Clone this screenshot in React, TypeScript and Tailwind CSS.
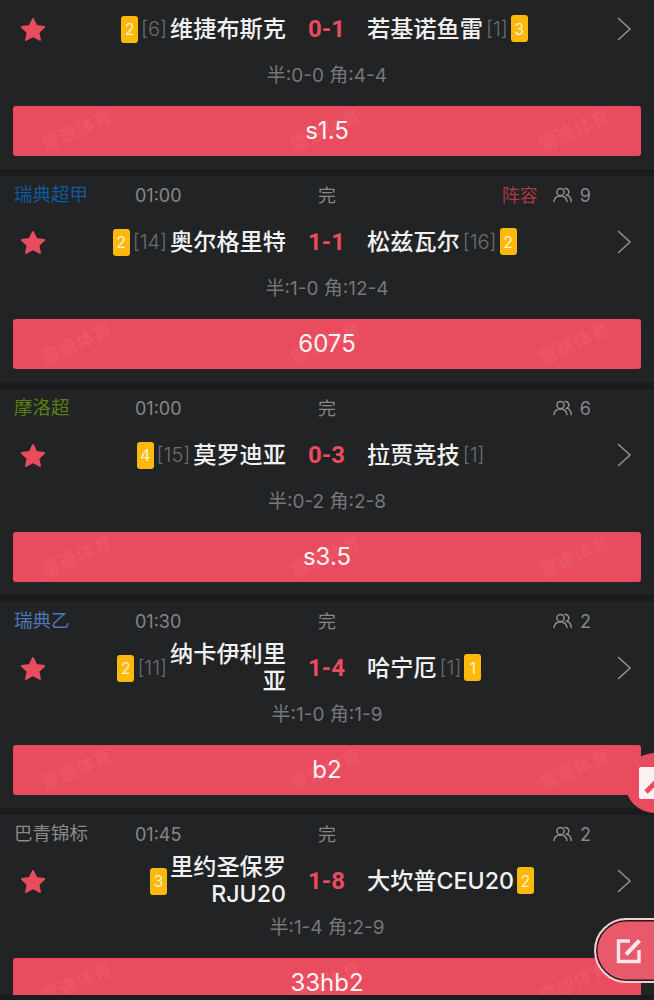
const FONT = 'font-["Inter","Noto_Sans_CJK_SC",sans-serif]';

type Match = {
  league?: string;
  leagueColor?: string;
  time?: string;
  lineup?: boolean;
  count?: number;
  home: string[];
  homeSeed?: string;
  homeCard?: number;
  away: string;
  awaySeed?: string;
  awayCard?: number;
  score: string;
  half: string;
  tip: string;
};

const MATCHES: Match[] = [
  { home: ['维捷布斯克'], homeSeed: '[6]', homeCard: 2, away: '若基诺鱼雷', awaySeed: '[1]', awayCard: 3, score: '0-1', half: '半:0-0 角:4-4', tip: 's1.5' },
  { league: '瑞典超甲', leagueColor: 'text-[#0f5a9e]', time: '01:00', lineup: true, count: 9, home: ['奥尔格里特'], homeSeed: '[14]', homeCard: 2, away: '松兹瓦尔', awaySeed: '[16]', awayCard: 2, score: '1-1', half: '半:1-0 角:12-4', tip: '6075' },
  { league: '摩洛超', leagueColor: 'text-[#5c7d12]', time: '01:00', count: 6, home: ['莫罗迪亚'], homeSeed: '[15]', homeCard: 4, away: '拉贾竞技', awaySeed: '[1]', score: '0-3', half: '半:0-2 角:2-8', tip: 's3.5' },
  { league: '瑞典乙', leagueColor: 'text-[#4d78b5]', time: '01:30', count: 2, home: ['纳卡伊利里', '亚'], homeSeed: '[11]', homeCard: 2, away: '哈宁厄', awaySeed: '[1]', awayCard: 1, score: '1-4', half: '半:1-0 角:1-9', tip: 'b2' },
  { league: '巴青锦标', leagueColor: 'text-[#8a8a8a]', time: '01:45', count: 2, home: ['里约圣保罗', 'RJU20'], homeCard: 3, away: '大坎普CEU20', awayCard: 2, score: '1-8', half: '半:1-4 角:2-9', tip: '33hb2' },
];

function StarIcon() {
  return (
    <svg width="26" height="25" viewBox="0 0 26 25" className="text-[#e94c5e]">
      <path
        d="M13 2l3.4 7 7.8 1-5.7 5.4 1.5 7.6L13 19.3l-7 3.7 1.5-7.6L1.8 10l7.8-1z"
        fill="currentColor"
        stroke="currentColor"
        strokeWidth="1.8"
        strokeLinejoin="round"
      />
    </svg>
  );
}

function ChevronIcon() {
  return (
    <svg width="16" height="26" viewBox="0 0 16 26" fill="none" stroke="#8f8f8f" strokeWidth="1.6">
      <path d="M2 2l12 11L2 24" />
    </svg>
  );
}

function PeopleIcon() {
  return (
    <svg width="20" height="16" viewBox="0 0 20 16" fill="none" stroke="#8f8f8f" strokeWidth="1.5" strokeLinecap="round">
      <circle cx="7.5" cy="5" r="3.6" />
      <path d="M1 14.5c.4-3.6 2.8-5.6 6.5-5.6s6 2 6.5 5.6" />
      <path d="M12 1.6c2-.4 3.9 1.2 3.9 3.3 0 1.5-.8 2.7-2 3.3 2.7.6 4 2.8 4.4 6.3" />
    </svg>
  );
}

function EditIcon({ size = 26 }: { size?: number }) {
  return (
    <svg width={size} height={size} viewBox="0 0 26 26" fill="none">
      <path d="M14 3H2.5v20.5H23V12" stroke="#fbe6e8" strokeWidth="3.4" />
      <path d="M10 16.5L23.5 2.5" stroke="#fbe6e8" strokeWidth="4" />
    </svg>
  );
}

function CardBadge({ n }: { n: number }) {
  return (
    <span className="flex h-[27px] w-[17px] shrink-0 items-center justify-center rounded-[3px] bg-[#fdb90b] text-[16px] text-[#fff3cf]">
      {n}
    </span>
  );
}

function Seed({ text }: { text: string }) {
  return <span className="text-[20px] font-light text-[#6a6d70]">{text}</span>;
}

function TipButton({ label }: { label: string }) {
  return (
    <div className="relative mx-[13px] flex h-[50px] shrink-0 items-center justify-center overflow-hidden rounded-[3px] bg-[#e94c5e] text-[24px] text-[#fdf3f4]">
      <span className="relative">{label}</span>
      {/* watermark */}
      <div className="absolute inset-0 flex justify-between pl-[29px] pr-[25px] pt-[13px]">
        {[0, 1, 2].map((i) => (
          <span key={i} className="block -rotate-[24deg] text-[18px] leading-[22px] tracking-[1px] text-white/[0.07]">
            雷速体育
          </span>
        ))}
      </div>
    </div>
  );
}

function MatchCard({ m }: { m: Match }) {
  return (
    <div className="shrink-0 border-b-[7px] border-[#1a1b1d] bg-[#222325] pb-[13px]">
      {m.league ? (
        <div className="grid h-[38px] grid-cols-[135px_150px_84px_1fr] items-center text-[18px] text-[#85878a]">
          <span className={`pl-[14px] text-[18.5px] ${m.leagueColor}`}>{m.league}</span>
          <span>{m.time}</span>
          <span className="text-center text-[18px]">完</span>
          <div className="flex items-center justify-end gap-[7px] pr-[63px]">
            {m.lineup && <span className="mr-[8px] text-[18px] text-[#a93a44]">阵容</span>}
            <PeopleIcon />
            <span>{m.count}</span>
          </div>
        </div>
      ) : (
        <div className="h-[1px]" />
      )}

      <div className="flex h-[56px] items-center">
        <div className="flex w-[60px] justify-start pl-[20px]">
          <StarIcon />
        </div>
        <div className="flex w-[226px] items-center justify-end gap-[3px]">
          {m.homeCard && <CardBadge n={m.homeCard} />}
          {m.homeSeed && <Seed text={m.homeSeed} />}
          <div className="text-right text-[23.2px] leading-[27px] font-medium text-[#f2f2f2]">
            {m.home.map((line) => (
              <div key={line}>{line}</div>
            ))}
          </div>
        </div>
        <div className="w-[81px] text-center font-['Roboto'] text-[24px] font-bold text-[#e94c5e]">{m.score}</div>
        <div className="flex flex-1 items-center gap-[3px]">
          <span className="text-[23.2px] font-medium text-[#f2f2f2]">{m.away}</span>
          {m.awaySeed && <Seed text={m.awaySeed} />}
          {m.awayCard && <CardBadge n={m.awayCard} />}
        </div>
        <div className="pr-[22px]">
          <ChevronIcon />
        </div>
      </div>

      <div className="flex h-[38px] items-center justify-center text-[19px] text-[#75777a]">{m.half}</div>
      <div className="h-[11px]" />
      <TipButton label={m.tip} />
    </div>
  );
}

export default function App() {
  return (
    <div className={`relative flex h-[1000px] w-[654px] flex-col overflow-hidden bg-[#222325] ${FONT}`}>
      {MATCHES.map((m) => (
        <MatchCard key={m.tip} m={m} />
      ))}

      {/* bottom edge */}
      <div className="absolute inset-x-0 bottom-0 h-[5px] bg-[#1a1b1d]" />

      {/* floating buttons */}
      <div className="absolute top-[753px] left-[625px] flex h-[60px] w-[60px] items-center rounded-full bg-[#e94c5e] pl-[14px]">
        <div className="flex h-[32px] w-[32px] items-center justify-center rounded-[2px] bg-[#fdf1f2]">
          <svg width="24" height="24" viewBox="0 0 24 24" fill="none">
            <path d="M3 21L20 4" stroke="#e94c5e" strokeWidth="5" />
          </svg>
        </div>
      </div>
      <div className="absolute top-[918px] left-[594px] flex h-[65px] w-[90px] items-center rounded-l-full border-2 border-[#f3cdd1] bg-[#e8596c] pl-[20px] shadow-[inset_0_0_0_1.5px_#1f1f22]">
        <EditIcon />
      </div>
    </div>
  );
}
